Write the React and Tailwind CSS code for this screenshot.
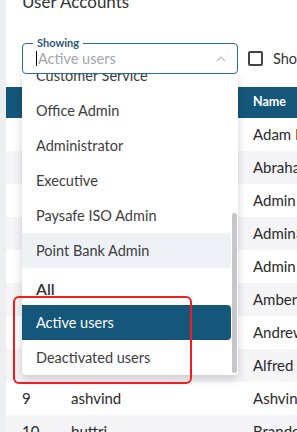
import React from "react";

const rows = [
  { id: 1, user: "adamb", name: "Adam Baker" },
  { id: 2, user: "abraham", name: "Abraham Lee" },
  { id: 3, user: "admin", name: "Admin User" },
  { id: 4, user: "admin3", name: "Admin3 Test" },
  { id: 5, user: "admin2", name: "Admin Two" },
  { id: 6, user: "amber", name: "Amber Stone" },
  { id: 7, user: "andrew", name: "Andrew Kim" },
  { id: 8, user: "alfred", name: "Alfred Pike" },
  { id: 9, user: "ashvind", name: "Ashvind Kumar" },
  { id: 10, user: "buttri", name: "Brandon Tri" },
];

const options = [
  "Customer Service",
  "Office Admin",
  "Administrator",
  "Executive",
  "Paysafe ISO Admin",
  "Point Bank Admin",
];

function ShowingSelect() {
  return (
    <div className="relative z-20 w-[216px] h-[31px] rounded-[4px] border border-[#2a6d98] bg-white">
      <span className="absolute -top-[8px] left-[10px] bg-white px-[4px] text-[11px] leading-[14px] font-bold text-[#2d5877]">
        Showing
      </span>
      <div className="flex h-full items-center pl-[13px] pr-[11px]">
        <span className="h-[15px] w-px bg-black" />
        <span className="ml-px flex-1 text-[14.5px] text-[#a3a6aa]">Active users</span>
        <svg width="10" height="6" viewBox="0 0 10 6" fill="none">
          <path d="M1 5 L5 1 L9 5" stroke="#bcbcbc" strokeWidth="1.2" />
        </svg>
      </div>
    </div>
  );
}

function Menu() {
  return (
    <div className="absolute left-[16px] top-[74px] z-10 h-[301px] w-[216px] overflow-hidden rounded-b-[4px] bg-white shadow-[0_4px_10px_rgba(0,0,0,0.18)]">
      <div className="-mt-[16px] pr-[7px]">
        {options.map((o, i) => (
          <div
            key={o}
            className={`flex h-[35px] items-center rounded-r-[4px] pl-[14px] text-[14.5px] text-[#3d3d3d] ${
              i === 5 ? "bg-[#eef2f6]" : ""
            }`}
          >
            {o}
          </div>
        ))}
        <div className="flex h-[37px] items-center pl-[14px] pt-[4px] text-[16px] font-semibold text-[#333]">
          All
        </div>
        <div className="flex h-[35px] items-center rounded-r-[4px] bg-[#15577a] pl-[14px] text-[14.5px] text-white">
          Active users
        </div>
        <div className="flex h-[35px] items-center pl-[14px] text-[14.5px] text-[#3d3d3d]">
          Deactivated users
        </div>
      </div>
      <div className="absolute right-[1px] top-[139px] h-[160px] w-[5px] rounded-full bg-[#c6c6ca]" />
    </div>
  );
}

export default function App() {
  return (
    <div
      className="flex h-[432px] w-[297px] overflow-hidden bg-[#eceef0]"
      style={{ fontFamily: "Lato, 'Open Sans', sans-serif" }}
    >
      <div className="w-[6px] shrink-0" />
      <div className="relative flex-1 bg-white">
        <div className="-mt-[10px] h-[24px] pl-[16px] text-[17px] leading-[24px] text-[#333]">
          User Accounts
        </div>

        <div className="mt-[29px] flex items-center pl-[16px]">
          <ShowingSelect />
          <div className="ml-[10px] h-[15px] w-[15px] shrink-0 rounded-[2px] border-2 border-[#444]" />
          <span className="ml-[10px] whitespace-nowrap text-[14.5px] text-[#333]">Show inactive</span>
        </div>

        <div className="mt-[13px]">
          <div className="flex h-[31px] items-center bg-[#15577a] pl-[16px] text-[12.5px] font-bold text-white">
            <span className="w-[49px]">#</span>
            <span className="w-[182px]">Username</span>
            <span>Name</span>
          </div>
          {rows.map((r, i) => (
            <div
              key={r.id}
              className={`flex h-[33px] items-center whitespace-nowrap pl-[16px] text-[15px] text-[#2a2a2a] ${
                i % 2 === 1 ? "bg-[#f5f5f7]" : "bg-white"
              }`}
            >
              <span className="w-[49px] shrink-0">{r.id}</span>
              <span className="w-[182px] shrink-0">{r.user}</span>
              <span>{r.name}</span>
            </div>
          ))}
        </div>

        <Menu />

        <div className="pointer-events-none absolute left-[7px] top-[296px] z-30 h-[88px] w-[179px] rounded-[6px] border-2 border-[#f21c1c]" />
      </div>
    </div>
  );
}
